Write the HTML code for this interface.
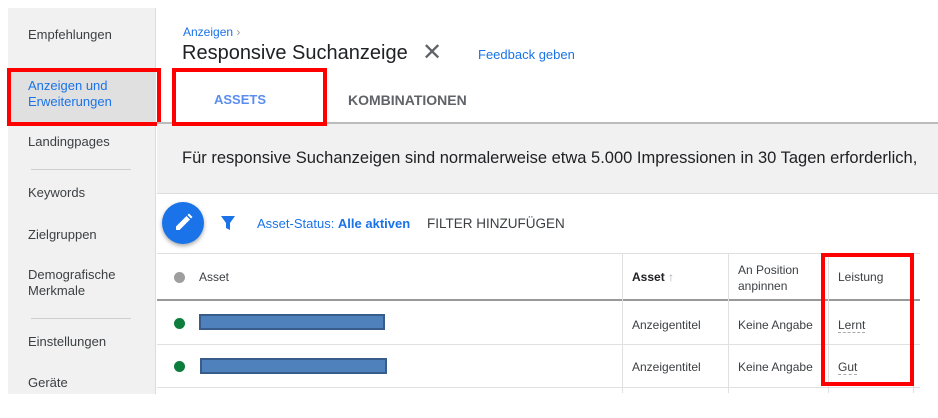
<!DOCTYPE html>
<html><head><style>
*{margin:0;padding:0;box-sizing:border-box}
body{width:938px;height:418px;background:#fff;font-family:"Liberation Sans",Arial,sans-serif;position:relative;overflow:hidden;color:#3c4043}
.a{position:absolute}
.side{left:8px;top:8px;width:148px;height:386px;background:#f1f1f1;border-right:1px solid #dadce0}
.si{position:absolute;left:20px;font-size:13px;color:#3c4043;line-height:16px}
.red{position:absolute;border:4px solid #f00}
.t{font-size:12px;color:#3c4043}
.vl{position:absolute;width:1px;background:#e0e0e0}
.hl{position:absolute;height:1px;background:#e0e0e0;left:157px;width:763px}
.bar{position:absolute;height:16px;background:#4f81bd;border:2px solid #385d8a}
.dot{position:absolute;width:11px;height:11px;border-radius:50%;background:#0d7d3e}
</style></head><body>
<div class="a side">
<div class="si" style="top:19px">Empfehlungen</div>
<div class="a" style="left:0;top:62px;width:148px;height:52px;background:#e0e0e0"></div>
<div class="si" style="top:70px;color:#1a73e8">Anzeigen und<br>Erweiterungen</div>
<div class="si" style="top:126px">Landingpages</div>
<div class="a" style="left:23px;top:161px;width:100px;height:1px;background:#d0d0d0"></div>
<div class="si" style="top:177px">Keywords</div>
<div class="si" style="top:219px">Zielgruppen</div>
<div class="si" style="top:259px">Demografische<br>Merkmale</div>
<div class="a" style="left:23px;top:310px;width:100px;height:1px;background:#d0d0d0"></div>
<div class="si" style="top:326px">Einstellungen</div>
<div class="si" style="top:367px">Geräte</div>
</div>
<div class="red" style="left:7px;top:68px;width:154px;height:58px"></div>

<div class="a" style="left:183px;top:25px;font-size:12px;color:#1a73e8">Anzeigen <span style="color:#999">›</span></div>
<div class="a" style="left:182px;top:42px;font-size:20px;color:#202124">Responsive Suchanzeige</div>
<div class="a" style="left:422px;top:38px;font-size:24px;color:#5f6368">✕</div>
<div class="a" style="left:478px;top:47px;font-size:13px;color:#1a73e8">Feedback geben</div>
<div class="a" style="left:214px;top:92px;font-size:13px;font-weight:bold;color:#5b8def">ASSETS</div>
<div class="a" style="left:348px;top:92px;font-size:14px;font-weight:bold;color:#5f6368">KOMBINATIONEN</div>
<div class="a" style="left:157px;top:122px;width:781px;height:2px;background:#bbb"></div>
<div class="a" style="left:157px;top:124px;width:781px;height:70px;background:#f1f1f1;border-bottom:1px solid #dadce0"></div>
<div class="red" style="left:172px;top:68px;width:155px;height:58px"></div>
<div class="a" style="left:182px;top:149px;font-size:16.5px;color:#202124;white-space:nowrap">Für responsive Suchanzeigen sind normalerweise etwa 5.000 Impressionen in 30 Tagen erforderlich,</div>

<div class="a" style="left:162px;top:202px;width:42px;height:42px;border-radius:50%;background:#1a73e8;box-shadow:0 2px 4px rgba(0,0,0,.35)">
<svg width="42" height="42" viewBox="0 0 42 42"><path d="M14 28 L14 24.5 L24.5 14 L28 17.5 L17.5 28 Z" fill="#fff"/><path d="M25.5 13 L27 11.5 L30.5 15 L29 16.5Z" fill="#fff"/></svg></div>
<svg class="a" style="left:220px;top:215px" width="16" height="16" viewBox="0 0 16 16"><path d="M1 1H15L10 8V15L6 13V8Z" fill="#1a73e8"/></svg>
<div class="a" style="left:257px;top:216px;font-size:13px;color:#1a73e8">Asset-Status: <b>Alle aktiven</b></div>
<div class="a" style="left:427px;top:216px;font-size:13.5px;color:#3c4043">FILTER HINZUFÜGEN</div>

<div class="hl" style="top:253px"></div>
<div class="a" style="left:157px;top:299px;width:763px;height:2px;background:#999"></div>
<div class="hl" style="top:344px"></div>
<div class="hl" style="top:387px"></div>
<div class="vl" style="left:622px;top:253px;height:140px"></div>
<div class="vl" style="left:728px;top:253px;height:140px"></div>
<div class="vl" style="left:828px;top:253px;height:140px"></div>
<div class="vl" style="left:913px;top:253px;height:140px"></div>
<div class="a" style="left:174px;top:272px;width:11px;height:11px;border-radius:50%;background:#9e9e9e"></div>
<div class="a t" style="left:199px;top:270px">Asset</div>
<div class="a t" style="left:632px;top:270px;font-weight:bold;color:#202124">Asset <span style="color:#aaa;font-weight:normal">↑</span></div>
<div class="a t" style="left:738px;top:262px;line-height:16px">An Position<br>anpinnen</div>
<div class="a t" style="left:838px;top:270px">Leistung</div>
<div class="dot" style="left:174px;top:318px"></div>
<div class="bar" style="left:199px;top:314px;width:186px"></div>
<div class="a t" style="left:632px;top:318px">Anzeigentitel</div>
<div class="a t" style="left:738px;top:318px">Keine Angabe</div>
<div class="a t" style="left:838px;top:318px;border-bottom:1px dashed #aaa">Lernt</div>
<div class="dot" style="left:174px;top:361px"></div>
<div class="bar" style="left:200px;top:358px;width:187px"></div>
<div class="a t" style="left:632px;top:360px">Anzeigentitel</div>
<div class="a t" style="left:738px;top:360px">Keine Angabe</div>
<div class="a t" style="left:838px;top:360px;border-bottom:1px dashed #aaa">Gut</div>
<div class="red" style="left:821px;top:253px;width:93px;height:133px"></div>
</body></html>
